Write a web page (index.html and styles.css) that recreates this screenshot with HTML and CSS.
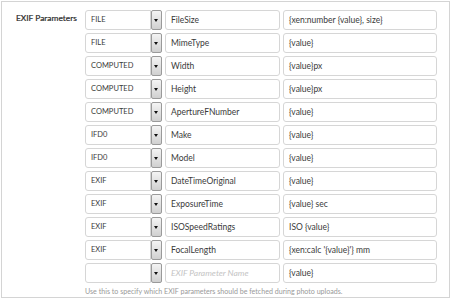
FILE: index.html
```html
<!DOCTYPE html>
<html lang="en">
<head>
    <meta charset="UTF-8">
    <title>EXIF Parameters</title>
    <link rel="stylesheet" href="styles.css">
</head>
<body>

<div class="panel">
    <div class="label">EXIF Parameters</div>
    <div class="fields">
        <div class="row">
            <div class="select"><span class="sel-text">FILE</span><span class="arrow"></span></div>
            <div class="input key">FileSize</div>
            <div class="input val">{xen:number {value}, size}</div>
        </div>
        <div class="row">
            <div class="select"><span class="sel-text">FILE</span><span class="arrow"></span></div>
            <div class="input key">MimeType</div>
            <div class="input val">{value}</div>
        </div>
        <div class="row">
            <div class="select"><span class="sel-text">COMPUTED</span><span class="arrow"></span></div>
            <div class="input key">Width</div>
            <div class="input val">{value}px</div>
        </div>
        <div class="row">
            <div class="select"><span class="sel-text">COMPUTED</span><span class="arrow"></span></div>
            <div class="input key">Height</div>
            <div class="input val">{value}px</div>
        </div>
        <div class="row">
            <div class="select"><span class="sel-text">COMPUTED</span><span class="arrow"></span></div>
            <div class="input key">ApertureFNumber</div>
            <div class="input val">{value}</div>
        </div>
        <div class="row">
            <div class="select"><span class="sel-text">IFD0</span><span class="arrow"></span></div>
            <div class="input key">Make</div>
            <div class="input val">{value}</div>
        </div>
        <div class="row">
            <div class="select"><span class="sel-text">IFD0</span><span class="arrow"></span></div>
            <div class="input key">Model</div>
            <div class="input val">{value}</div>
        </div>
        <div class="row">
            <div class="select"><span class="sel-text">EXIF</span><span class="arrow"></span></div>
            <div class="input key">DateTimeOriginal</div>
            <div class="input val">{value}</div>
        </div>
        <div class="row">
            <div class="select"><span class="sel-text">EXIF</span><span class="arrow"></span></div>
            <div class="input key">ExposureTime</div>
            <div class="input val">{value} sec</div>
        </div>
        <div class="row">
            <div class="select"><span class="sel-text">EXIF</span><span class="arrow"></span></div>
            <div class="input key">ISOSpeedRatings</div>
            <div class="input val">ISO {value}</div>
        </div>
        <div class="row">
            <div class="select"><span class="sel-text">EXIF</span><span class="arrow"></span></div>
            <div class="input key">FocalLength</div>
            <div class="input val">{xen:calc '{value}'} mm</div>
        </div>
        <div class="row">
            <div class="select"><span class="sel-text"></span><span class="arrow"></span></div>
            <div class="input key placeholder">EXIF Parameter Name</div>
            <div class="input val">{value}</div>
        </div>
        <p class="hint">Use this to specify which EXIF parameters should be fetched during photo uploads.</p>
    </div>
</div>

</body>
</html>
```

FILE: styles.css
```css
body { margin: 0; background: #fff; font-family: Lato, "Open Sans", sans-serif; color: #333; }
.panel {
    margin: 1px 0 0 1px; border: 1px solid #d4d4d4;
    display: flex; padding-top: 8px; box-sizing: border-box; height: 297px; width: 449px;
}
.label { width: 83px; padding-left: 14px; box-sizing: border-box; font-size: 8.4px; line-height: 15px; color: #2a2a2a; padding-top: 1px; white-space: nowrap; -webkit-text-stroke: 0.2px #2a2a2a; }
.fields { display: flex; flex-direction: column; gap: 3px; }
.row { display: flex; gap: 3px; height: 20px; }
.select { display: flex; width: 77px; }
.sel-text, .input {
    border: 1px solid #d6d6d6; border-radius: 3px; background: #fff; color: #3a3a3a;
    font-size: 8.5px; line-height: 18px; padding-left: 5px; box-sizing: border-box; white-space: nowrap; overflow: hidden;
}
.sel-text { width: 66px; border-radius: 3px 0 0 3px; font-size: 7.5px; }
.arrow {
    width: 11px; border: 1px solid #9a9a9a; border-radius: 2px; box-sizing: border-box;
    background: linear-gradient(#f4f4f4, #d0d0d0); position: relative;
}
.arrow::after {
    content: ""; position: absolute; left: 2px; top: 8px;
    border-left: 2.5px solid transparent; border-right: 2.5px solid transparent; border-top: 3px solid #111;
}
.key { width: 115px; }
.val { width: 154px; }
.placeholder { color: #c4c4c4; font-style: italic; }
.hint { margin: 0; font-size: 7.1px; color: #999; line-height: 9px; padding-top: 1px; }
```
